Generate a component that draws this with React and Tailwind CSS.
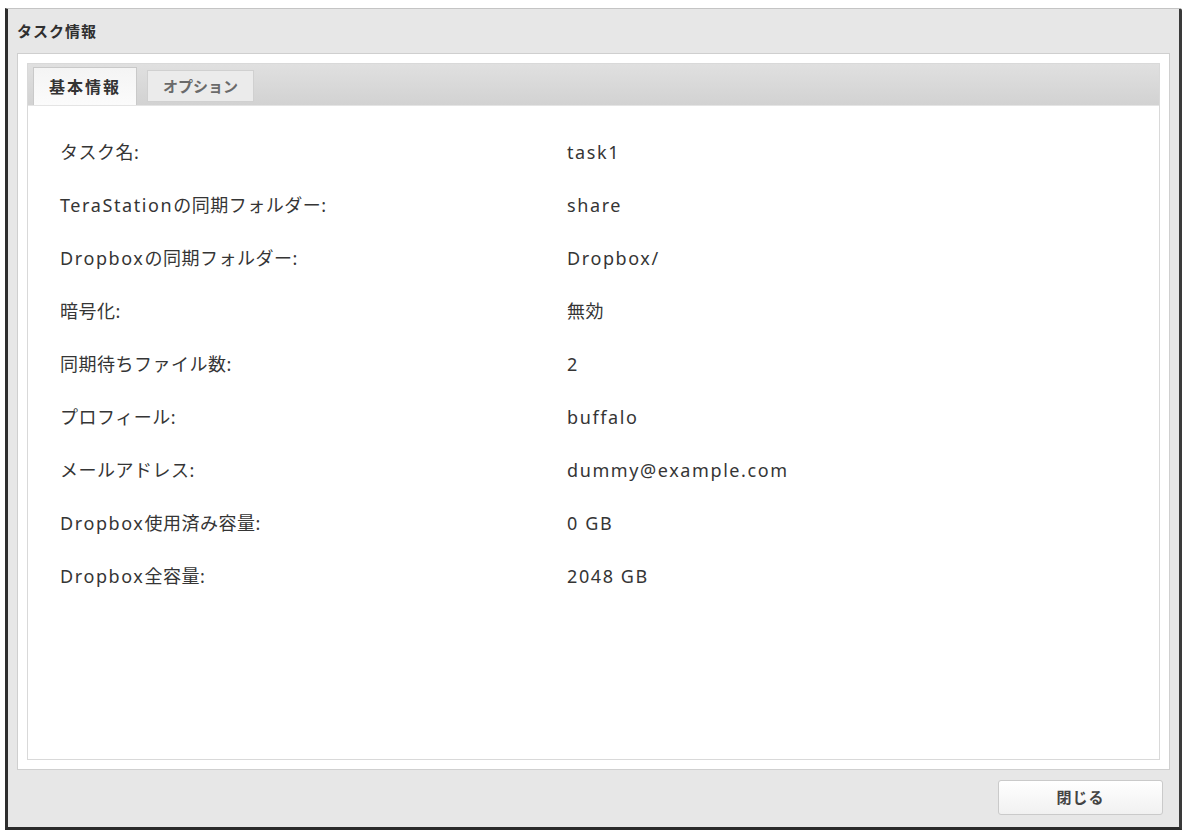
import React from "react";

const rows = [
  ["タスク名:", "task1"],
  ["TeraStationの同期フォルダー:", "share"],
  ["Dropboxの同期フォルダー:", "Dropbox/"],
  ["暗号化:", "無効"],
  ["同期待ちファイル数:", "2"],
  ["プロフィール:", "buffalo"],
  ["メールアドレス:", "dummy@example.com"],
  ["Dropbox使用済み容量:", "0 GB"],
  ["Dropbox全容量:", "2048 GB"],
];

const font = { fontFamily: '"Noto Sans", "Noto Sans CJK JP", sans-serif' };

// latin runs get a little extra spacing, kana/kanji stay as they are
function Mixed({ text }) {
  const parts = text.split(/([\x20-\x7e]+)/).filter(Boolean);
  return (
    <>
      {parts.map((p, i) =>
        /^[\x20-\x7e]+$/.test(p) ? (
          <span key={i} className="tracking-[1.6px]">{p}</span>
        ) : (
          <span key={i} className="tracking-[0.5px]">{p}</span>
        )
      )}
    </>
  );
}

export default function App() {
  return (
    <div className="w-[1190px] h-[837px] bg-white pt-[8px] pl-[5px]" style={font}>
      <div className="w-[1177px] h-[822px] flex flex-col bg-[#e7e7e7] border-t border-t-[#c4c4c4] border-l-[3px] border-l-[#2e2e2e] border-r-[3px] border-r-[#3a3a3a] border-b-[3px] border-b-[#2a2a2a] rounded-tr-[3px]">
        {/* title bar */}
        <div className="h-[44px] flex items-center pl-[9px] text-[15px] font-bold text-[#2f2f2f] tracking-[1px]">
          タスク情報
        </div>

        {/* panel */}
        <div className="mx-[9px] h-[717px] bg-white border border-[#cfcfcf] p-[9px] flex">
          <div className="flex-1 flex flex-col border border-[#d9d9d9]">
            <div className="h-[42px] flex items-end gap-[10px] pl-[5px] bg-gradient-to-b from-[#e0e0e0] to-[#d2d2d2] border-b border-[#e4e4e4]">
              <div className="w-[104px] h-[38px] flex items-center justify-center bg-gradient-to-b from-[#f4f4f4] to-[#fbfbfb] border border-b-0 border-[#c9c9c9] text-[16px] font-bold text-[#333] tracking-[2px]">
                基本情報
              </div>
              <div className="w-[107px] h-[32px] mb-[3px] flex items-center justify-center bg-[#ebebeb] border border-[#d0d0d0] text-[15px] font-bold text-[#6a6a6a]">
                オプション
              </div>
            </div>
            <div className="flex-1 pt-[20px] pl-[32px]">
              {rows.map(([label, value]) => (
                <div key={label} className="h-[53px] flex items-center text-[18px] text-[#353535]">
                  <div className="w-[507px]">
                    <Mixed text={label} />
                  </div>
                  <div>
                    <Mixed text={value} />
                  </div>
                </div>
              ))}
            </div>
          </div>
        </div>

        {/* footer */}
        <div className="flex-1 flex items-start justify-end pt-[10px] pr-[16px]">
          <button className="w-[165px] h-[35px] rounded-[3px] border border-[#cacaca] bg-gradient-to-b from-[#ffffff] to-[#f1f1f1] text-[15px] font-bold text-[#444] tracking-[1px]">
            閉じる
          </button>
        </div>
      </div>
    </div>
  );
}
